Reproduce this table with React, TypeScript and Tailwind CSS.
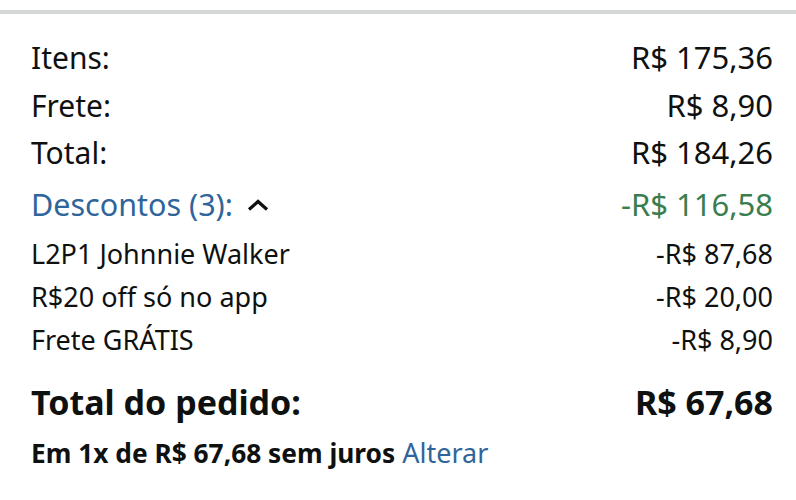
import React from 'react';

type Line = { label: string; value: string };

const summary: Line[] = [
  { label: 'Itens:', value: 'R$ 175,36' },
  { label: 'Frete:', value: 'R$ 8,90' },
  { label: 'Total:', value: 'R$ 184,26' }
];

const discounts: Line[] = [
  { label: 'L2P1 Johnnie Walker', value: '-R$ 87,68' },
  { label: 'R$20 off só no app', value: '-R$ 20,00' },
  { label: 'Frete GRÁTIS', value: '-R$ 8,90' }
];

const ChevronUp = () => (
  <svg width="22" height="12" viewBox="0 0 22 12" className="ml-[14px] mt-[2px]">
    <polyline points="2,10.5 11,2.5 20,10.5" fill="none" stroke="#0f1111" strokeWidth="3.2" />
  </svg>
);

const App = () => {
  return (
    <div
      className="w-[796px] h-[500px] bg-white text-[#0f1111] overflow-hidden"
      style={{ fontFamily: '"Noto Sans", "Open Sans", sans-serif' }}
    >
      <div className="h-[4px] mt-[10px] bg-[#d5d6d6]" />
      <div className="pl-[31px] pr-[23px] pt-[20px]">
        {summary.map((row) => (
          <div key={row.label} className="flex justify-between text-[31px] leading-[47.5px]">
            <span className="text-[30px]">{row.label}</span>
            <span>{row.value}</span>
          </div>
        ))}
        <div className="flex justify-between items-center text-[31px] leading-[47px] mt-[4px]">
          <div className="flex items-center">
            <span className="text-[#30659b] text-[30.5px]">Descontos (3):</span>
            <ChevronUp />
          </div>
          <span className="text-[#3a7d4e]">-R$ 116,58</span>
        </div>
        <div className="mt-[4px]">
          {discounts.map((row) => (
            <div key={row.label} className="flex justify-between text-[27px] leading-[43px]">
              <span>{row.label}</span>
              <span>{row.value}</span>
            </div>
          ))}
        </div>
        <div className="flex justify-between font-bold text-[34px] leading-[44px] mt-[19px]">
          <span>Total do pedido:</span>
          <span>R$ 67,68</span>
        </div>
        <div className="text-[27px] leading-[40px] mt-[9px]">
          <span className="font-bold text-[26.3px]">Em 1x de R$ 67,68 sem juros</span>{' '}
          <span className="text-[#30659b]">Alterar</span>
        </div>
      </div>
    </div>
  );
};

export default App;
